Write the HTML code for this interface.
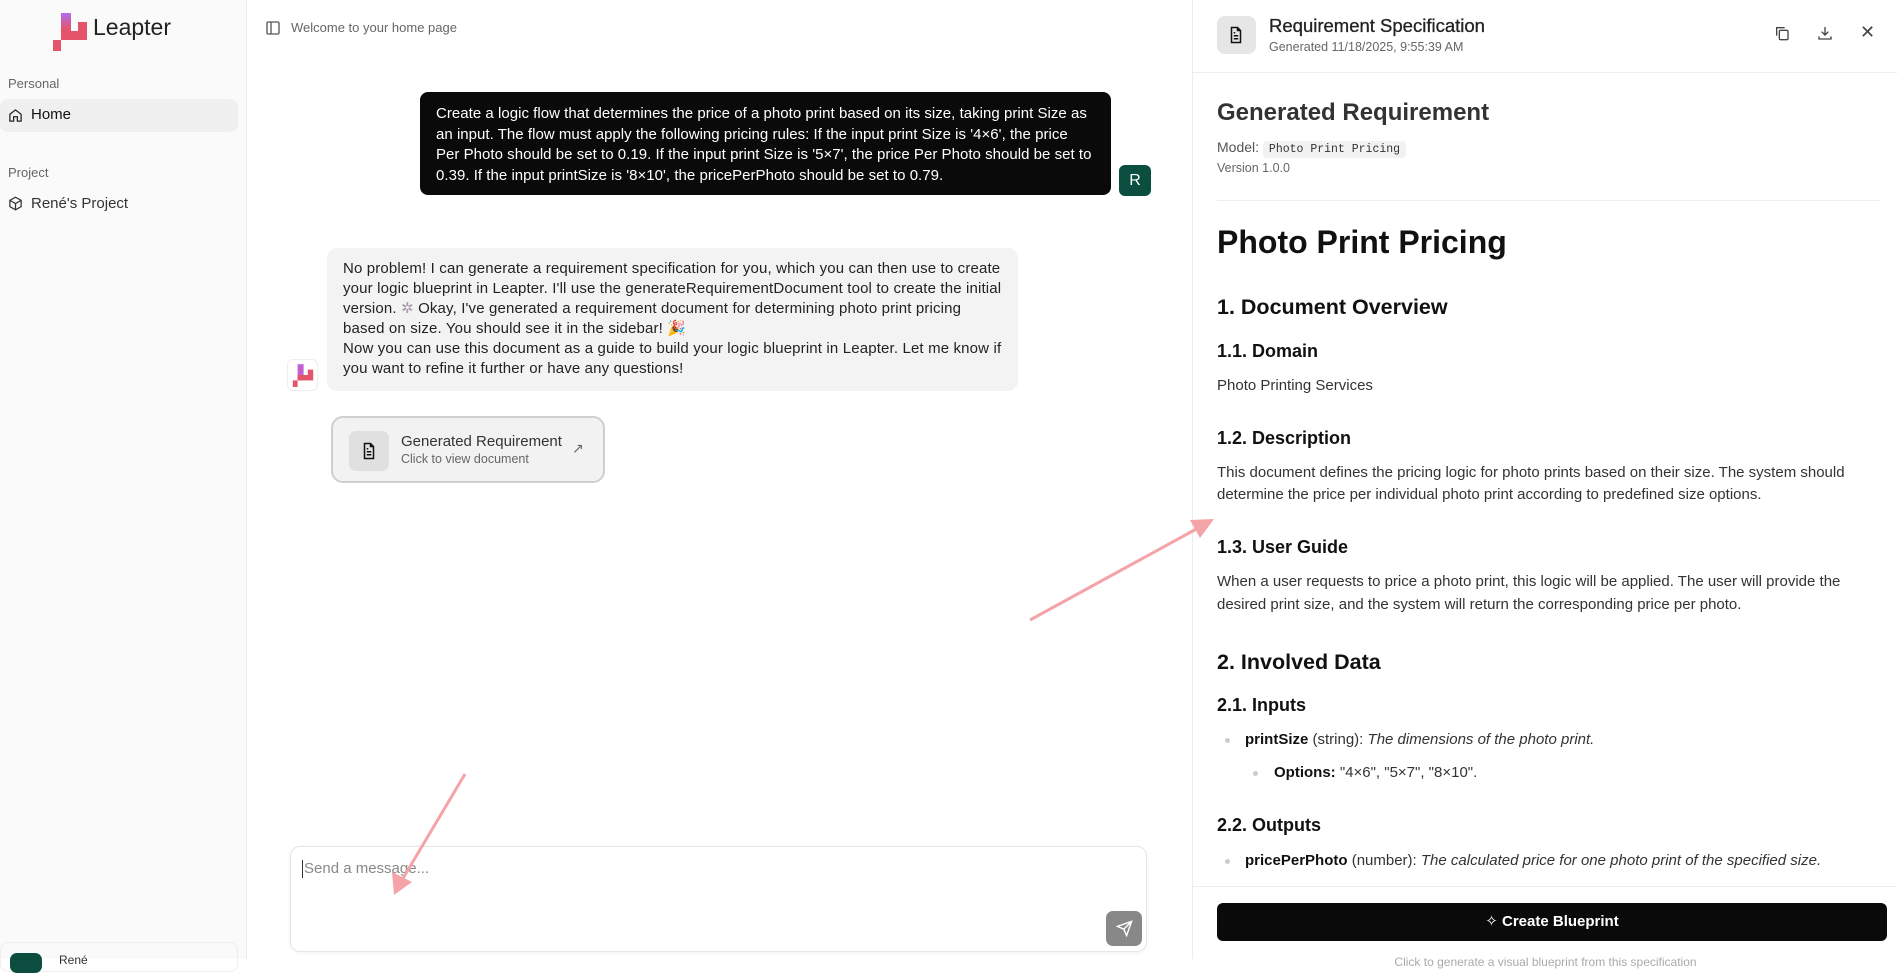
<!DOCTYPE html>
<html><head><meta charset="utf-8"><style>
*{box-sizing:border-box;margin:0;padding:0}
body{width:1897px;height:959px;overflow:hidden;background:#fff;font-family:"Liberation Sans","DejaVu Sans",sans-serif;color:#111;position:relative}
.a{position:absolute;white-space:nowrap}
.side{position:absolute;left:0;top:0;width:247px;height:959px;background:#fafafa;border-right:1px solid #ececec}
.rp{position:absolute;left:1192px;top:0;width:705px;height:959px;border-left:1px solid #ececec;background:#fff}
.h{font-weight:bold;color:#111}
.p{font-size:15px;color:#333}
</style></head><body>
<div class="side">
  <svg class="a" style="left:53px;top:11px" width="34" height="40" viewBox="53 11 34 40">
    <defs><linearGradient id="g" x1="0" y1="0" x2="0" y2="1"><stop offset="0" stop-color="#b06ef0"/><stop offset=".6" stop-color="#e4546a"/></linearGradient></defs>
    <rect x="61" y="13" width="10" height="27" fill="url(#g)"/>
    <rect x="61" y="31" width="26" height="9" fill="#e4546a"/>
    <rect x="78" y="22" width="9" height="9" fill="#e4546a"/>
    <rect x="53" y="40" width="8" height="11" fill="#e4546a"/>
  </svg>
  <div class="a" style="left:93px;top:14px;font-size:23px;color:#222">Leapter</div>
  <div class="a" style="left:8px;top:76px;font-size:13px;color:#666">Personal</div>
  <div class="a" style="left:0;top:99px;width:238px;height:33px;background:#f0f0f0;border-radius:8px"></div>
  <svg class="a" style="left:8px;top:108px" width="15" height="15" viewBox="0 0 24 24" fill="none" stroke="#222" stroke-width="2"><path d="M3 10l9-7 9 7v11H15v-7H9v7H3z"/></svg>
  <div class="a" style="left:31px;top:106px;font-size:15px;color:#111">Home</div>
  <div class="a" style="left:8px;top:165px;font-size:13px;color:#666">Project</div>
  <svg class="a" style="left:8px;top:196px" width="15" height="15" viewBox="0 0 24 24" fill="none" stroke="#333" stroke-width="2"><path d="M12 2l9 5v10l-9 5-9-5V7z M3 7l9 5 9-5 M12 12v10"/></svg>
  <div class="a" style="left:31px;top:195px;font-size:15px;color:#333">René's Project</div>
  <div class="a" style="left:0;top:942px;width:238px;height:30px;border:1px solid #eee;border-radius:8px"></div>
  <div class="a" style="left:10px;top:953px;width:32px;height:20px;background:#0b4d3e;border-radius:7px"></div>
  <div class="a" style="left:59px;top:953px;font-size:12px;color:#333">René</div>
</div>

<svg class="a" style="left:265px;top:20px" width="16" height="16" viewBox="0 0 24 24" fill="none" stroke="#555" stroke-width="2"><rect x="3" y="3" width="18" height="18" rx="2"/><path d="M9 3v18"/></svg>
<div class="a" style="left:291px;top:20px;font-size:13px;color:#666">Welcome to your home page</div>

<div class="a" style="left:420px;top:92px;width:691px;height:103px;background:#0a0a0a;border-radius:8px;padding:12px 16px;color:#fff;font-size:15px;letter-spacing:0.03px;line-height:20.5px;white-space:normal">Create a logic flow that determines the price of a photo print based on its size, taking print Size as an input. The flow must apply the following pricing rules: If the input print Size is '4×6', the price Per Photo should be set to 0.19. If the input print Size is '5×7', the price Per Photo should be set to 0.39. If the input printSize is '8×10', the pricePerPhoto should be set to 0.79.</div>
<div class="a" style="left:1119px;top:165px;width:32px;height:31px;background:#0b4d3e;border-radius:6px;color:#fff;font-size:16px;text-align:center;line-height:31px">R</div>

<div class="a" style="left:327px;top:248px;width:691px;height:143px;background:#f3f3f3;border-radius:10px;padding:11px 16px;color:#222;font-size:15px;letter-spacing:0.15px;line-height:20.1px;white-space:normal">No problem! I can generate a requirement specification for you, which you can then use to create your logic blueprint in Leapter. I'll use the generateRequirementDocument tool to create the initial version. <span style="color:#a9a">✲</span> Okay, I've generated a requirement document for determining photo print pricing based on size. You should see it in the sidebar! 🎉<br>Now you can use this document as a guide to build your logic blueprint in Leapter. Let me know if you want to refine it further or have any questions!</div>
<div class="a" style="left:287px;top:359px;width:31px;height:32px;background:#fff;border:1px solid #eee;border-radius:6px"></div>
<svg class="a" style="left:291px;top:363px" width="24" height="24" viewBox="53 11 34 40">
  <rect x="61" y="13" width="10" height="27" fill="#c060d0"/><rect x="61" y="31" width="26" height="9" fill="#e4546a"/><rect x="78" y="22" width="9" height="9" fill="#e4546a"/><rect x="53" y="40" width="8" height="11" fill="#e4546a"/></svg>

<div class="a" style="left:331px;top:416px;width:274px;height:67px;background:#f2f2f2;border:2px solid #cfcfcf;border-radius:12px"></div>
<div class="a" style="left:349px;top:431px;width:40px;height:40px;background:#e0e0e0;border-radius:7px"></div>
<svg class="a" style="left:360px;top:442px" width="18" height="18" viewBox="0 0 24 24" fill="none" stroke="#111" stroke-width="2"><path d="M14 2H6v20h12V6z M14 2v4h4 M9 13h6 M9 17h6 M9 9h2"/></svg>
<div class="a" style="left:401px;top:433px;font-size:15px;color:#333">Generated Requirement</div>
<div class="a" style="left:401px;top:452px;font-size:12.5px;color:#666">Click to view document</div>
<div class="a" style="left:572px;top:440px;font-size:14px;color:#666">↗</div>

<div class="a" style="left:290px;top:846px;width:857px;height:106px;border:1px solid #e6e6e6;border-radius:10px;box-shadow:0 1px 3px rgba(0,0,0,.06)"></div>
<div class="a" style="left:302px;top:860px;width:1px;height:18px;background:#333"></div>
<div class="a" style="left:304px;top:860px;font-size:15px;color:#888">Send a message...</div>
<div class="a" style="left:1106px;top:911px;width:36px;height:35px;background:#888;border-radius:7px"></div>
<svg class="a" style="left:1116px;top:920px" width="17" height="17" viewBox="0 0 24 24" fill="none" stroke="#fff" stroke-width="2"><path d="M22 2L11 13 M22 2l-7 20-4-9-9-4z"/></svg>

<div class="rp">
  <div class="a" style="left:24px;top:16px;width:39px;height:38px;background:#e6e6e6;border-radius:8px"></div>
  <svg class="a" style="left:34px;top:26px" width="18" height="18" viewBox="0 0 24 24" fill="none" stroke="#111" stroke-width="2"><path d="M14 2H6v20h12V6z M14 2v4h4 M9 13h6 M9 17h6 M9 9h2"/></svg>
  <div class="a" style="left:76px;top:15px;font-size:18.5px;color:#222;-webkit-text-stroke:0.3px #222">Requirement Specification</div>
  <div class="a" style="left:76px;top:40px;font-size:12.5px;color:#666">Generated 11/18/2025, 9:55:39 AM</div>
  <svg class="a" style="left:581px;top:25px" width="16" height="16" viewBox="0 0 24 24" fill="none" stroke="#444" stroke-width="2"><rect x="8" y="8" width="13" height="14" rx="2"/><path d="M4 16V4h12"/></svg>
  <svg class="a" style="left:624px;top:25px" width="16" height="16" viewBox="0 0 24 24" fill="none" stroke="#444" stroke-width="2"><path d="M12 3v12 M7 10l5 5 5-5 M3 17v4h18v-4"/></svg>
  <div class="a" style="left:667px;top:22px;font-size:18px;color:#444">✕</div>
  <div class="a" style="left:0;top:72px;width:705px;height:1px;background:#ececec"></div>

  <div class="a h" style="left:24px;top:99px;font-size:24px;color:#333">Generated Requirement</div>
  <div class="a" style="left:24px;top:139px;font-size:14px;color:#555">Model: <span style="font-family:'Liberation Mono',monospace;font-size:11.5px;background:#f2f2f2;border-radius:4px;padding:2px 6px;color:#333">Photo Print Pricing</span></div>
  <div class="a" style="left:24px;top:161px;font-size:12.5px;color:#666">Version 1.0.0</div>
  <div class="a" style="left:24px;top:200px;width:663px;height:1px;background:#ececec"></div>

  <div class="a h" style="left:24px;top:224px;font-size:32px">Photo Print Pricing</div>
  <div class="a h" style="left:24px;top:295px;font-size:21.5px">1. Document Overview</div>
  <div class="a h" style="left:24px;top:341px;font-size:18px">1.1. Domain</div>
  <div class="a p" style="left:24px;top:377px">Photo Printing Services</div>
  <div class="a h" style="left:24px;top:428px;font-size:18px">1.2. Description</div>
  <div class="a p" style="left:24px;top:464px">This document defines the pricing logic for photo prints based on their size. The system should</div>
  <div class="a p" style="left:24px;top:486px">determine the price per individual photo print according to predefined size options.</div>
  <div class="a h" style="left:24px;top:537px;font-size:18px">1.3. User Guide</div>
  <div class="a p" style="left:24px;top:573px">When a user requests to price a photo print, this logic will be applied. The user will provide the</div>
  <div class="a p" style="left:24px;top:596px">desired print size, and the system will return the corresponding price per photo.</div>
  <div class="a h" style="left:24px;top:650px;font-size:21.5px">2. Involved Data</div>
  <div class="a h" style="left:24px;top:695px;font-size:18px">2.1. Inputs</div>
  <div class="a" style="left:32px;top:738px;width:5px;height:5px;border-radius:50%;background:#ccc"></div>
  <div class="a p" style="left:52px;top:731px"><b style="color:#111">printSize</b> (string): <i>The dimensions of the photo print.</i></div>
  <div class="a" style="left:60px;top:771px;width:5px;height:5px;border-radius:50%;background:#ccc"></div>
  <div class="a p" style="left:81px;top:764px"><b style="color:#111">Options:</b> "4×6", "5×7", "8×10".</div>
  <div class="a h" style="left:24px;top:815px;font-size:18px">2.2. Outputs</div>
  <div class="a" style="left:32px;top:859px;width:5px;height:5px;border-radius:50%;background:#ccc"></div>
  <div class="a p" style="left:52px;top:852px"><b style="color:#111">pricePerPhoto</b> (number): <i>The calculated price for one photo print of the specified size.</i></div>
  <div class="a" style="left:0;top:886px;width:705px;height:1px;background:#ececec"></div>
  <div class="a" style="left:24px;top:903px;width:670px;height:38px;background:#0a0a0a;border-radius:6px;color:#fff;font-size:15px;font-weight:bold;text-align:center;line-height:38px">✧ Create Blueprint</div>
  <div class="a" style="left:0;top:955px;width:705px;text-align:center;font-size:12px;color:#aaa">Click to generate a visual blueprint from this specification</div>
</div>

<svg class="a" style="left:0;top:0" width="1897" height="959">
  <line x1="1030" y1="620" x2="1200" y2="527" stroke="#f4a3a8" stroke-width="3"/>
  <polygon points="1214,519 1190,520 1200,538" fill="#f4a3a8"/>
  <line x1="465" y1="774" x2="402" y2="880" stroke="#f4a3a8" stroke-width="3"/>
  <polygon points="394,895 392,872 412,882" fill="#f4a3a8"/>
</svg>
</body></html>
